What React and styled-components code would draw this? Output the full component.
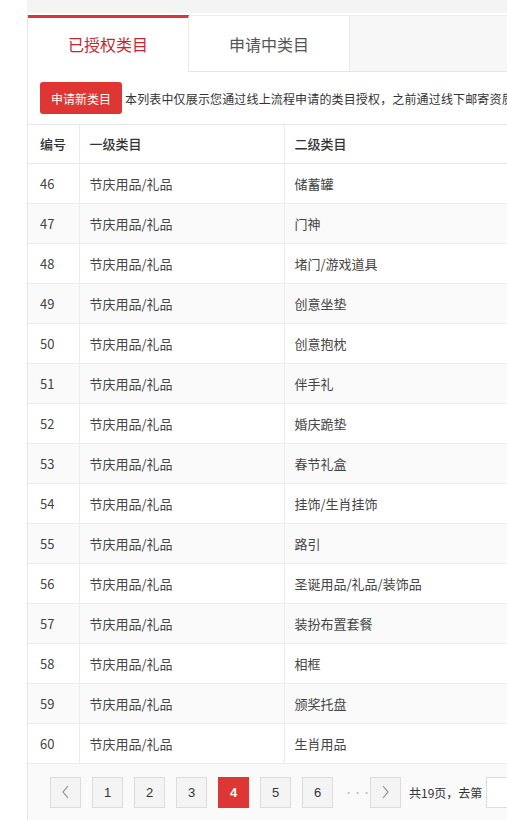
import React from "react";
import styled, { createGlobalStyle } from "styled-components";

const GlobalStyle = createGlobalStyle`
  html, body {
    margin: 0;
    padding: 0;
    background: #fff;
    overflow: hidden;
  }
  body {
    font-family: "Noto Sans CJK SC", "Microsoft YaHei", sans-serif;
    color: #333;
  }
`;

const Page = styled.div`
  width: 900px;
  padding-left: 27px;
`;

const TopStrip = styled.div`
  height: 13px;
  background: #f4f4f4;
  margin-bottom: 2px;
`;

const Panel = styled.div`
  border-left: 1px solid #e6e6e6;
  background: #fff;
`;

const Tabs = styled.div`
  display: flex;
  height: 56px;
  background: #f7f7f7;
  border-top: 1px solid #ececec;
`;

const Tab = styled.div`
  width: 161px;
  box-sizing: border-box;
  display: flex;
  align-items: center;
  justify-content: center;
  font-size: 16px;
  background: #fff;
  color: ${p => (p.$active ? "#c7262c" : "#555")};
  border-top: ${p => (p.$active ? "3px solid #d9363a" : "0")};
  margin-top: ${p => (p.$active ? "-1px" : "0")};
  border-right: 1px solid #ececec;
  border-bottom: ${p => (p.$active ? "0" : "1px solid #e6e6e6")};
  padding-bottom: ${p => (p.$active ? "2px" : "0")};
`;

const TabRest = styled.div`
  flex: 1;
  border-bottom: 1px solid #e6e6e6;
`;

const Toolbar = styled.div`
  display: flex;
  align-items: center;
  height: 53px;
  padding: 0 12px;
  border-bottom: 1px solid #e8e8e8;
  box-sizing: border-box;
  white-space: nowrap;
`;

const PrimaryButton = styled.button`
  height: 32px;
  padding: 0 11px;
  border: 0;
  border-radius: 3px;
  background: #de3535;
  color: #fff;
  font-family: inherit;
  font-size: 12px;
  margin-right: 3px;
`;

const Note = styled.span`
  font-size: 12px;
  letter-spacing: 0.15px;
  color: #333;
`;

const Table = styled.table`
  width: 100%;
  border-collapse: collapse;
  font-size: 13px;
`;

const HeadCell = styled.th`
  height: 38px;
  text-align: left;
  font-weight: 500;
  color: #333;
  padding: 0 10px;
  border-bottom: 1px solid #e8e8e8;
  border-left: ${p => (p.$first ? "0" : "1px solid #ececec")};
  width: ${p => p.$width || "auto"};
  box-sizing: border-box;
  &:first-child { padding-left: 12px; }
`;

const Row = styled.tr`
  background: ${p => (p.$odd ? "#fafafa" : "#fff")};
`;

const Cell = styled.td`
  height: 39px;
  padding: 0 10px;
  color: #444;
  border-bottom: 1px solid #ececec;
  border-left: ${p => (p.$first ? "0" : "1px solid #ececec")};
  &:first-child { padding-left: 12px; }
`;

const Pager = styled.div`
  display: flex;
  align-items: center;
  gap: 11px;
  height: 57px;
  padding-left: 22px;
  background: #fafafa;
  white-space: nowrap;
`;

const PageBtn = styled.div`
  width: 31px;
  height: 31px;
  box-sizing: border-box;
  display: flex;
  align-items: center;
  justify-content: center;
  font-size: 13px;
  font-family: "Liberation Sans", Arial, sans-serif;
  border: 1px solid ${p => (p.$active ? "#de3535" : "#dcdcdc")};
  background: ${p => (p.$active ? "#de3535" : "#f4f4f4")};
  color: ${p => (p.$active ? "#fff" : "#333")};
  font-weight: ${p => (p.$active ? "bold" : "normal")};
`;

const Dots = styled.span`
  width: 15px;
  text-align: center;
  color: #bbb;
  font-size: 9px;
`;

const Jump = styled.span`
  font-size: 12px;
  color: #333;
  margin-left: -3px;
`;

const JumpInput = styled.div`
  width: 40px;
  height: 29px;
  border: 1px solid #dcdcdc;
  background: #fff;
  margin-left: -7px;
`;

const Chevron = ({ dir }) => (
  <svg width="9" height="14" viewBox="0 0 9 14" fill="none" stroke="#888" strokeWidth="1.1">
    {dir === "left" ? <path d="M7 1 L2 7 L7 13" /> : <path d="M2 1 L7 7 L2 13" />}
  </svg>
);

const subs = [
  "储蓄罐",
  "门神",
  "堵门/游戏道具",
  "创意坐垫",
  "创意抱枕",
  "伴手礼",
  "婚庆跪垫",
  "春节礼盒",
  "挂饰/生肖挂饰",
  "路引",
  "圣诞用品/礼品/装饰品",
  "装扮布置套餐",
  "相框",
  "颁奖托盘",
  "生肖用品",
];

export default function App() {
  return (
    <Page>
      <GlobalStyle />
      <TopStrip />
      <Panel>
        <Tabs>
          <Tab $active>已授权类目</Tab>
          <Tab>申请中类目</Tab>
          <TabRest />
        </Tabs>
        <Toolbar>
          <PrimaryButton>申请新类目</PrimaryButton>
          <Note>本列表中仅展示您通过线上流程申请的类目授权，之前通过线下邮寄资质申请的类目授权请联系客服查询。</Note>
        </Toolbar>
        <Table>
          <thead>
            <tr>
              <HeadCell $first $width="51px">编号</HeadCell>
              <HeadCell $width="205px">一级类目</HeadCell>
              <HeadCell>二级类目</HeadCell>
            </tr>
          </thead>
          <tbody>
            {subs.map((s, i) => (
              <Row key={s} $odd={i % 2 === 1}>
                <Cell $first>{46 + i}</Cell>
                <Cell>节庆用品/礼品</Cell>
                <Cell>{s}</Cell>
              </Row>
            ))}
          </tbody>
        </Table>
        <Pager>
          <PageBtn><Chevron dir="left" /></PageBtn>
          {[1, 2, 3, 4, 5, 6].map(n => (
            <PageBtn key={n} $active={n === 4}>{n}</PageBtn>
          ))}
          <Dots>···</Dots>
          <PageBtn><Chevron dir="right" /></PageBtn>
          <Jump>共19页，去第</Jump>
          <JumpInput />
        </Pager>
      </Panel>
    </Page>
  );
}
